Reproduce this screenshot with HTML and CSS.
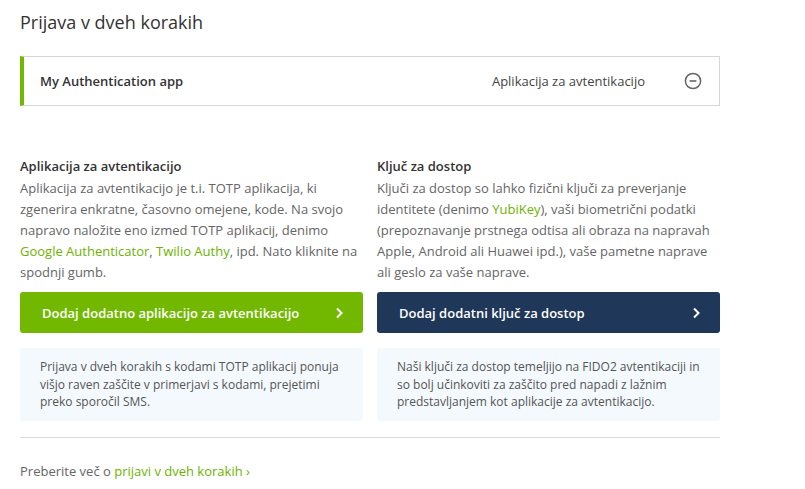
FILE: index.html
```html
<!DOCTYPE html>
<html lang="sl">
<head>
<meta charset="utf-8">
<link rel="stylesheet" href="styles.css">
</head>
<body>
<div class="page">
  <h1 class="title">Prijava v dveh korakih</h1>
  <div class="method">
    <span class="method-name">My Authentication app</span>
    <span class="method-type">Aplikacija za avtentikacijo</span>
    <svg class="method-icon" width="18" height="18" viewBox="0 0 18 18" aria-hidden="true">
      <circle cx="9" cy="9" r="7.6" fill="none" stroke="#666" stroke-width="1.5"/>
      <line x1="5.6" y1="9" x2="12.4" y2="9" stroke="#666" stroke-width="1.6"/>
    </svg>
  </div>
  <div class="columns">
    <div class="col">
      <h2 class="col-title">Aplikacija za avtentikacijo</h2>
      <p class="col-text">Aplikacija za avtentikacijo je t.i. TOTP aplikacija, ki zgenerira enkratne, časovno omejene, kode. Na svojo napravo naložite eno izmed TOTP aplikacij, denimo <a href="#">Google Authenticator</a>, <a href="#">Twilio Authy</a>, ipd. Nato kliknite na spodnji gumb.</p>
      <a class="btn btn-green" href="#"><span>Dodaj dodatno aplikacijo za avtentikacijo</span>
        <svg width="10" height="12" viewBox="0 0 10 12"><path d="M3 1.5 L7.5 6 L3 10.5" fill="none" stroke="#fff" stroke-width="2"/></svg>
      </a>
      <div class="note">Prijava v dveh korakih s kodami TOTP aplikacij ponuja višjo raven zaščite v primerjavi s kodami, prejetimi preko sporočil SMS.</div>
    </div>
    <div class="col">
      <h2 class="col-title">Ključ za dostop</h2>
      <p class="col-text">Ključi za dostop so lahko fizični ključi za preverjanje identitete (denimo <a href="#">YubiKey</a>), vaši biometrični podatki (prepoznavanje prstnega odtisa ali obraza na napravah Apple, Android ali Huawei ipd.), vaše pametne naprave ali geslo za vaše naprave.</p>
      <a class="btn btn-navy" href="#"><span>Dodaj dodatni ključ za dostop</span>
        <svg width="10" height="12" viewBox="0 0 10 12"><path d="M3 1.5 L7.5 6 L3 10.5" fill="none" stroke="#fff" stroke-width="2"/></svg>
      </a>
      <div class="note">Naši ključi za dostop temeljijo na FIDO2 avtentikaciji in so bolj učinkoviti za zaščito pred napadi z lažnim predstavljanjem kot aplikacije za avtentikacijo.</div>
    </div>
  </div>
  <hr class="divider">
  <p class="footer">Preberite več o <a href="#">prijavi v dveh korakih&nbsp;›</a></p>
</div>
</body>
</html>
```
FILE: styles.css
```css
* { box-sizing: border-box; }
html, body { margin: 0; padding: 0; background: #fff; }
body { font-family: "Open Sans", "Noto Sans", sans-serif; color: #333; }
.page { width: 740px; padding: 10px 20px 0 20px; }
.title { margin: 0; font-size: 18px; line-height: 24px; font-weight: 400; color: #333; }
.method {
  margin-top: 22px;
  height: 50px;
  border: 1px solid #d6d6d6;
  border-left: 4px solid #72b800;
  display: flex;
  align-items: center;
  padding: 0 17px 0 16px;
}
.method-name { font-size: 13px; font-weight: 600; color: #333; flex: 1; }
.method-type { font-size: 13px; color: #444; margin-right: 39px; }
.method-icon { display: block; }
.columns { display: grid; grid-template-columns: 343px 343px; column-gap: 14px; margin-top: 50px; }
.col { display: flex; flex-direction: column; }
.col-title { margin: 0; font-size: 13px; line-height: 20px; font-weight: 600; color: #333; }
.col-text { margin: 2px 0 0; font-size: 13px; line-height: 21px; color: #666; height: 107px; }
.col-text a, .footer a { color: #6cb300; text-decoration: none; }
.btn {
  margin-top: 7px;
  height: 41px;
  border-radius: 3px;
  display: flex;
  align-items: center;
  justify-content: space-between;
  padding: 0 19px 0 22px;
  color: #fff;
  font-size: 13px;
  font-weight: 600;
  text-decoration: none;
}
.btn svg { display: block; }
.btn-green { background: #72b800; }
.btn-navy { background: #1f3758; }
.note {
  margin-top: 15px;
  background: #f3f9fd;
  border-radius: 3px;
  padding: 10px 20px;
  font-size: 12px;
  line-height: 17.5px;
  color: #555;
  min-height: 72px;
}
.divider { margin: 16px 0 0; border: 0; border-top: 1px solid #dcdcdc; }
.footer { margin: 23px 0 0; font-size: 13px; line-height: 20px; color: #666; }
```
